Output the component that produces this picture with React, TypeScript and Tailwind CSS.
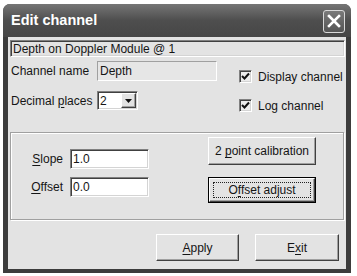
import React from "react";

const sunken =
  "border border-t-[#808080] border-l-[#808080] border-b-white border-r-white shadow-[inset_1px_1px_0_#404040,inset_-1px_-1px_0_#d4d4d4]";
const raised =
  "border border-t-white border-l-white border-b-[#404040] border-r-[#404040] shadow-[inset_-1px_-1px_0_#a0a0a0]";

function Key({ children }: { children: React.ReactNode }) {
  return <span className="underline underline-offset-[2px]">{children}</span>;
}

function CloseButton() {
  return (
    <div className="w-[22px] h-[23px] rounded-[3px] border border-[#d8d8d8] bg-gradient-to-b from-[#7a7a7a] to-[#555] flex items-center justify-center">
      <svg width="14" height="14" viewBox="0 0 14 14">
        <path d="M2 2 L12 12 M12 2 L2 12" stroke="white" strokeWidth="2.6" strokeLinecap="square" />
      </svg>
    </div>
  );
}

function Check({ label }: { label: string }) {
  return (
    <div className="flex items-center h-[13px] gap-[6px]">
      <div className={`w-[13px] h-[13px] bg-[#ececec] flex items-center justify-center ${sunken}`}>
        <svg width="9" height="9" viewBox="0 0 9 9">
          <path d="M1 4 L3.5 6.5 L8 1.5" stroke="#111" strokeWidth="2" fill="none" />
        </svg>
      </div>
      <span>{label}</span>
    </div>
  );
}

function Button({ children, w, h, isDefault }: { children: React.ReactNode; w: string; h: string; isDefault?: boolean }) {
  if (isDefault) {
    return (
      <div className={`${w} ${h} border border-black flex`}>
        <div className={`flex-1 flex p-[3px] ${raised}`}>
          <div className="flex-1 border border-dotted border-[#222] flex items-center justify-center">
            <span>{children}</span>
          </div>
        </div>
      </div>
    );
  }
  return (
    <div className={`${w} ${h} flex items-center justify-center ${raised}`}>
      <span>{children}</span>
    </div>
  );
}

export default function App() {
  return (
    <div className="w-[357px] h-[276px] bg-white pt-[4px] pl-[3px] font-['Liberation_Sans',sans-serif] text-[12px] text-[#151515]">
      <div className="w-[348px] h-[269px] flex flex-col rounded-t-[7px] bg-[#3c3c3c] overflow-hidden">
        {/* title bar */}
        <div className="h-[33px] shrink-0 flex items-center justify-between pl-[8px] pr-[6px] pt-[1px] bg-gradient-to-b from-[#767676] via-[#4e4e4e] to-[#464646]">
          <span className="font-bold text-[14.5px] text-white">Edit channel</span>
          <CloseButton />
        </div>

        <div className="flex-1 mx-[5px] mb-[4px] bg-[#e3e3e3] flex flex-col">
          <div className="pl-[2px] pr-[1px] pt-[3px]">
            <div className={`h-[17px] flex items-center pl-[2px] ${sunken}`}>Depth on Doppler Module @ 1</div>
          </div>

          <div className="flex mt-[4px]">
            <div className="pl-[3px]">
              <div className="flex items-center h-[20px]">
                <span className="w-[86px]">Channel name</span>
                <div className="w-[120px] h-[20px] flex items-center pl-[2px] bg-[#e6e6e6] border border-t-[#a0a0a0] border-l-[#a0a0a0] border-b-white border-r-white">
                  Depth
                </div>
              </div>
              <div className="flex items-center h-[19px] mt-[10px]">
                <span className="w-[86px]">
                  Decimal <Key>p</Key>laces
                </span>
                <div className={`w-[41px] h-[19px] bg-white flex ${sunken}`}>
                  <span className="flex-1 flex items-center pl-[2px]">2</span>
                  <div className={`w-[15px] m-[1px] flex items-center justify-center bg-[#e3e3e3] ${raised}`}>
                    <svg width="7" height="4" viewBox="0 0 7 4">
                      <path d="M0 0 H7 L3.5 4 Z" fill="#111" />
                    </svg>
                  </div>
                </div>
              </div>
            </div>
            <div className="ml-[22px] pt-[9px] flex flex-col gap-[16px]">
              <Check label="Display channel" />
              <Check label="Log channel" />
            </div>
          </div>

          <div className="mt-[20px] mx-[2px] w-[334px] h-[88px] border border-[#a0a0a0] shadow-[inset_1px_1px_0_#fff,1px_1px_0_#fff] flex">
            <div className="pt-[16px] flex flex-col gap-[8px]">
              <div className="flex items-center h-[20px]">
                <span className="w-[52px] text-right">
                  <Key>S</Key>lope
                </span>
                <div className={`ml-[7px] w-[79px] h-[20px] bg-white flex items-center pl-[2px] ${sunken}`}>1.0</div>
              </div>
              <div className="flex items-center h-[20px]">
                <span className="w-[52px] text-right">
                  <Key>O</Key>ffset
                </span>
                <div className={`ml-[7px] w-[79px] h-[20px] bg-white flex items-center pl-[2px] ${sunken}`}>0.0</div>
              </div>
            </div>
            <div className="ml-auto mr-[27px] pt-[4px] flex flex-col gap-[12px]">
              <Button w="w-[108px]" h="h-[28px]">
                2 <Key>p</Key>oint calibration
              </Button>
              <Button w="w-[108px]" h="h-[26px]" isDefault>
                O<Key>f</Key>fset adjust
              </Button>
            </div>
          </div>

          <div className="mt-[14px] flex justify-end gap-[16px] pr-[7px]">
            <Button w="w-[83px]" h="h-[27px]">
              <Key>A</Key>pply
            </Button>
            <Button w="w-[84px]" h="h-[27px]">
              E<Key>x</Key>it
            </Button>
          </div>
        </div>
      </div>
    </div>
  );
}
